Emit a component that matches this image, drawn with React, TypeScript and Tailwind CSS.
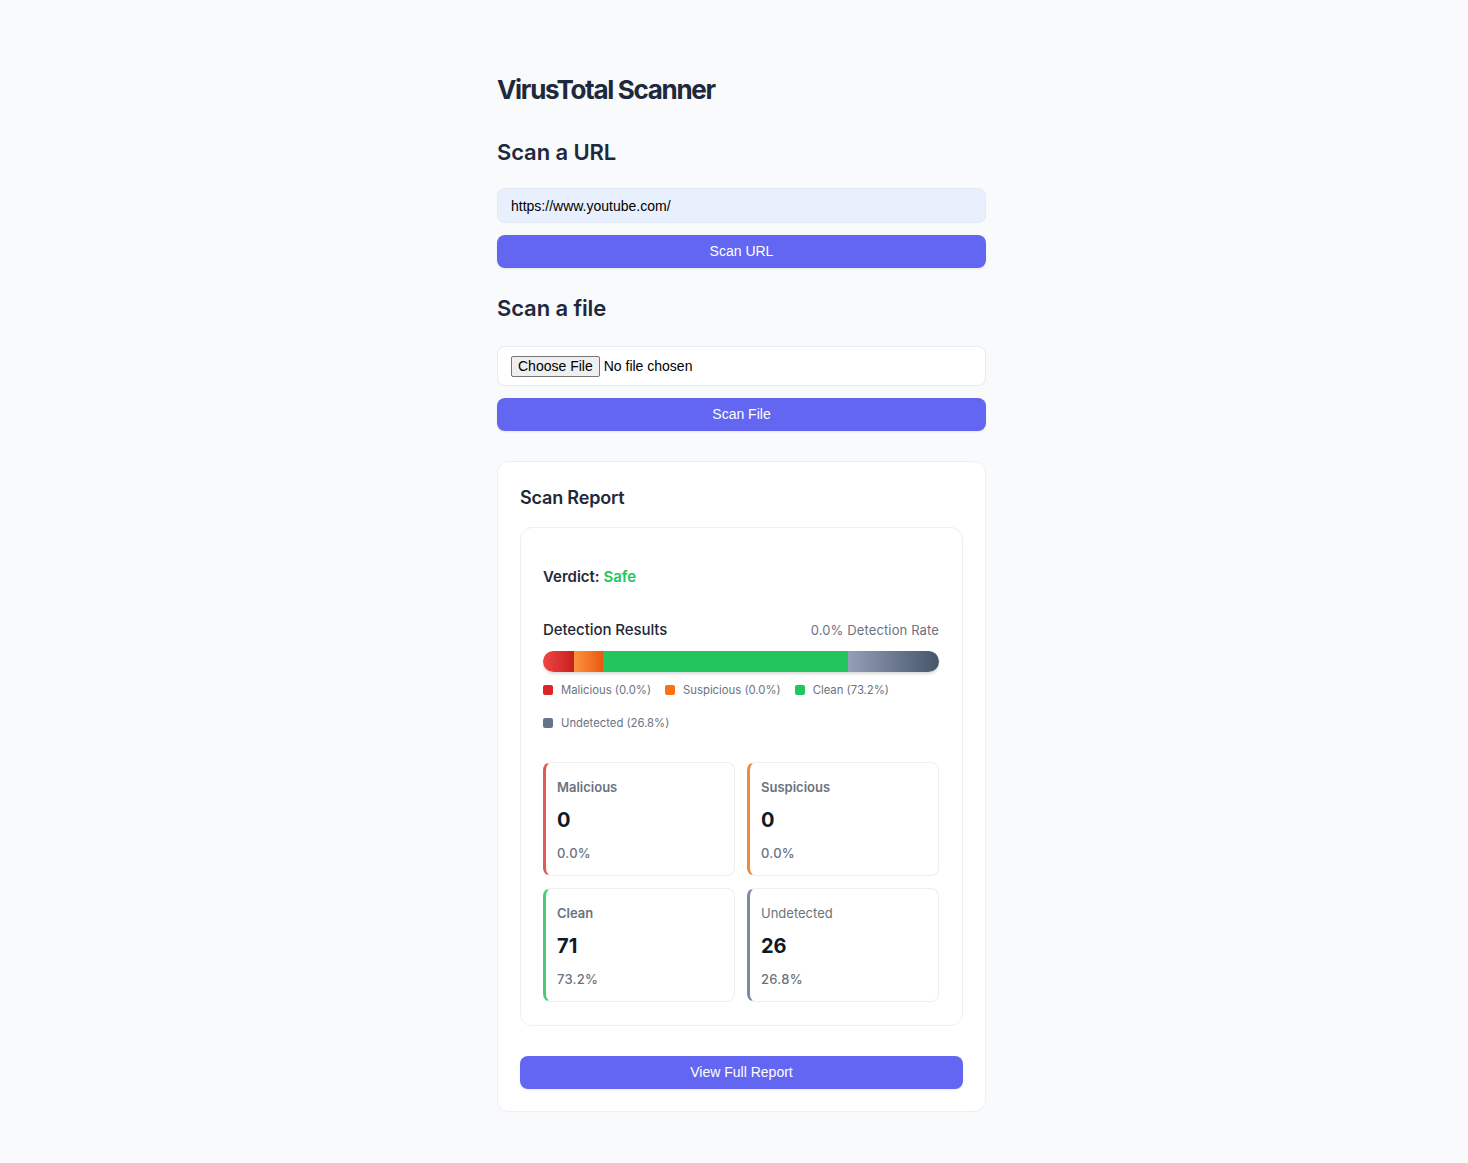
import React from "react";

const INTER = "font-['Inter',sans-serif]";
const ARIAL = "font-['Liberation_Sans',Arial,sans-serif]";

const LEGEND = [
  { label: "Malicious (0.0%)", color: "bg-[#dc2626]" },
  { label: "Suspicious (0.0%)", color: "bg-[#f97316]" },
  { label: "Clean (73.2%)", color: "bg-[#22c55e]" },
  { label: "Undetected (26.8%)", color: "bg-[#64748b]" },
];

const STATS = [
  { label: "Malicious", value: "0", pct: "0.0%", border: "border-l-[#e05a5a]", bold: true },
  { label: "Suspicious", value: "0", pct: "0.0%", border: "border-l-[#f0883e]", bold: true },
  { label: "Clean", value: "71", pct: "73.2%", border: "border-l-[#4cc97a]", bold: true },
  { label: "Undetected", value: "26", pct: "26.8%", border: "border-l-[#7c8aa3]", bold: false },
];

function PrimaryButton({ children }: { children: React.ReactNode }) {
  return (
    <button
      className={`${ARIAL} w-full h-[33px] rounded-lg bg-[#6366f1] text-white text-[14px] shadow-[0_1px_2px_rgba(0,0,0,0.08)]`}
    >
      {children}
    </button>
  );
}

export default function App() {
  return (
    <div className={`${INTER} min-h-screen bg-[#f8fafc] text-[#1e293b] flex justify-center pl-[15px]`}>
      <div className="w-[489px] pt-[74px] pb-[52px] flex flex-col">
        <h1 className="text-[26px] leading-8 font-bold tracking-[-0.05em]">VirusTotal Scanner</h1>

        {/* URL scan */}
        <h2 className="mt-8 text-[22px] leading-7 font-semibold tracking-[-0.005em]">Scan a URL</h2>
        <input
          readOnly
          value="https://www.youtube.com/"
          className={`${ARIAL} mt-[22px] h-[35px] w-full rounded-lg bg-[#e8f0fe] border border-[#e3e9f2] px-[13px] text-[14px] text-black outline-none`}
        />
        <div className="mt-3">
          <PrimaryButton>Scan URL</PrimaryButton>
        </div>

        {/* File scan */}
        <h2 className="mt-[26px] text-[22px] leading-7 font-semibold tracking-[-0.005em]">Scan a file</h2>
        <div
          className={`${ARIAL} mt-6 h-10 w-full rounded-lg bg-white border border-[#e8ebf0] flex items-center px-[13px] text-[14px] text-black`}
        >
          <span className="h-[21px] px-[6px] flex items-center bg-[#efefef] border border-[#767676] rounded-[2px] text-[14px]">
            Choose File
          </span>
          <span className="ml-[4px]">No file chosen</span>
        </div>
        <div className="mt-3">
          <PrimaryButton>Scan File</PrimaryButton>
        </div>

        {/* Report */}
        <section className="mt-[30px] rounded-xl bg-white border border-[#eceff3] p-[22px] pt-[24px]">
          <h3 className="text-[18px] leading-6 font-semibold tracking-[-0.01em]">Scan Report</h3>

          <div className="mt-[17px] rounded-xl border border-[#eceff3] pl-[22px] pr-[23px] pt-[39px] pb-[23px]">
            <p className="text-[15px] leading-5 font-semibold">
              Verdict: <span className="text-[#22c55e]">Safe</span>
            </p>

            <div className="mt-[33px] flex items-center justify-between">
              <span className="text-[15px] leading-5 font-medium text-[#1f2937] tracking-[-0.005em]">Detection Results</span>
              <span className="text-[13px] leading-5 text-[#6b7280] tracking-[0.01em]">0.0% Detection Rate</span>
            </div>

            <div className="mt-[11px] h-[21px] w-full rounded-full overflow-hidden flex shadow-[0_2px_3px_rgba(0,0,0,0.15)]">
              <div className="w-[31px] bg-gradient-to-r from-[#ef4444] to-[#c81e1e]" />
              <div className="w-[29px] bg-gradient-to-r from-[#fb923c] to-[#ea580c]" />
              <div className="w-[245px] bg-[#22c55e]" />
              <div className="flex-1 bg-gradient-to-r from-[#94a0b8] to-[#475569]" />
            </div>

            <div className="mt-[10px] flex flex-wrap gap-x-[14px] gap-y-[17px]">
              {LEGEND.map((l) => (
                <div key={l.label} className="flex items-center gap-2 text-[11.3px] leading-4 text-[#6b7280]">
                  <span className={`w-[10px] h-[10px] rounded-[2px] ${l.color}`} />
                  {l.label}
                </div>
              ))}
            </div>

            <div className="mt-[31px] grid grid-cols-2 gap-3">
              {STATS.map((s) => (
                <div
                  key={s.label}
                  className={`h-[114px] rounded-lg border border-[#eceff3] border-l-[3px] ${s.border} pl-[11px] pt-[15px]`}
                >
                  <div className={`text-[13px] leading-[18px] text-[#6b7280] ${s.bold ? "font-semibold" : ""}`}>
                    {s.label}
                  </div>
                  <div className="mt-[10px] text-[20px] leading-7 font-bold text-[#111827]">{s.value}</div>
                  <div className="mt-[10px] text-[13px] leading-[18px] text-[#6b7280] font-medium tracking-[0.02em]">{s.pct}</div>
                </div>
              ))}
            </div>
          </div>

          <div className="mt-[30px]">
            <PrimaryButton>View Full Report</PrimaryButton>
          </div>
        </section>
      </div>
    </div>
  );
}
